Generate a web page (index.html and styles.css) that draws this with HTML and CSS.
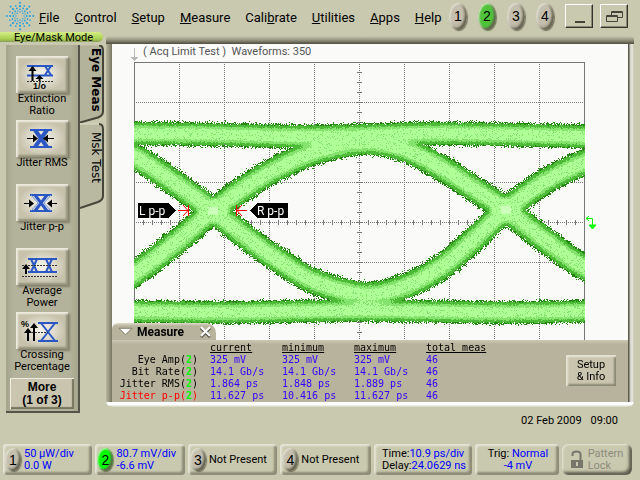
FILE: index.html
```html
<!DOCTYPE html>
<html lang="en">
<head>
<meta charset="utf-8">
<title>Eye/Mask Mode</title>
<link rel="stylesheet" href="styles.css">
</head>
<body>
<header class="menubar">
  <svg class="logo" viewBox="0 0 32 32" aria-hidden="true">
    <defs><g id="ray"><circle cx="16" cy="12" r=".7"/><circle cx="16" cy="9.300" r=".9"/><circle cx="16" cy="6.200" r="1.100"/><circle cx="16" cy="2.800" r="1"/></g>
    <g id="short"><circle cx="16" cy="10.500" r=".7"/><circle cx="16" cy="7.800" r=".9"/><circle cx="16" cy="5" r=".8"/></g></defs>
    <g fill="#269fdc">
      <use href="#ray"/><use href="#ray" transform="rotate(45 16 16)"/><use href="#ray" transform="rotate(90 16 16)"/><use href="#ray" transform="rotate(135 16 16)"/>
      <use href="#ray" transform="rotate(180 16 16)"/><use href="#ray" transform="rotate(225 16 16)"/><use href="#ray" transform="rotate(270 16 16)"/><use href="#ray" transform="rotate(315 16 16)"/>
      <use href="#short" transform="rotate(22.500 16 16)"/><use href="#short" transform="rotate(67.500 16 16)"/><use href="#short" transform="rotate(112.500 16 16)"/><use href="#short" transform="rotate(157.500 16 16)"/>
      <use href="#short" transform="rotate(202.500 16 16)"/><use href="#short" transform="rotate(247.500 16 16)"/><use href="#short" transform="rotate(292.500 16 16)"/><use href="#short" transform="rotate(337.500 16 16)"/>
    </g>
  </svg>
  <nav class="menus">
    <button><u>F</u>ile</button><button><u>C</u>ontrol</button><button><u>S</u>etup</button><button><u>M</u>easure</button><button>Cali<u>b</u>rate</button><button><u>U</u>tilities</button><button><u>A</u>pps</button><button><u>H</u>elp</button>
  </nav>
  <div class="channels">
    <button class="knob">1</button><button class="knob knob-on">2</button><button class="knob">3</button><button class="knob">4</button>
  </div>
  <div class="window-buttons">
    <button aria-label="Minimize"><svg viewBox="0 0 26 21"><path d="M9 16h10" stroke="#444438" stroke-width="2"/></svg></button>
    <button aria-label="Restore"><svg viewBox="0 0 26 21" fill="none" stroke="#444438"><path d="M10.500 10V5.500h11v6h-5M10 6.500h12"/><path d="M5.500 9.500h11v6h-11zM5 10.500h12"/></svg></button>
  </div>
</header>

<main class="workspace">
  <aside class="sidebar">
    <h1 class="mode">Eye/Mask Mode</h1>
    <div class="side-body">
      <div class="tools">
        <div class="tool"><button aria-labelledby="t1"><svg viewBox="0 0 51 36">
          <path d="M11 9h26M11 18.500h26M29 9l6 9m0-9l-6 9" stroke="#2a57c4" stroke-width="2" fill="none"/>
          <path d="M16.500 24V10M23.500 24v-4" stroke="#000" stroke-width="2"/><path d="M12.500 14l4-5 4 5zM19.500 22l4-4 4 4z"/>
          <path d="M11 24.500h27" stroke="#333" stroke-dasharray="2 1"/><text x="17" y="32">1/o</text></svg></button><span id="t1">Extinction<br>Ratio</span></div>
        <div class="tool"><button aria-labelledby="t2"><svg viewBox="0 0 51 36">
          <path d="M14 9h22M14 26h22" stroke="#2a57c4" stroke-width="2"/><path d="M19 9l12 17M31 9L19 26" stroke="#2a57c4" stroke-width="4"/>
          <path d="M11 17.500h8M38 17.500h-8" stroke="#000"/><path d="M17 13.500l5 4-5 4zM32 13.500l-5 4 5 4z"/></svg></button><span id="t2">Jitter RMS</span></div>
        <div class="tool"><button aria-labelledby="t3"><svg viewBox="0 0 51 36">
          <path d="M14 10h22M14 26h22" stroke="#2a57c4" stroke-width="2"/><path d="M19 10l12 16M31 10L19 26" stroke="#2a57c4" stroke-width="3"/><path d="M15 10l7 8-7 8M35 10l-7 8 7 8" fill="none" stroke="#6f95dd"/>
          <path d="M8 18.500h8M41 18.500h-8" stroke="#000"/><path d="M13 14.500l5 4-5 4zM36 14.500l-5 4 5 4z"/></svg></button><span id="t3">Jitter p-p</span></div>
        <div class="tool"><button aria-labelledby="t4"><svg viewBox="0 0 51 36">
          <path d="M12 10h29M12 23h29M15 10l6 13m-6 0l6-13M30 10l6 13m-6 0l6-13" stroke="#2a57c4" stroke-width="2"/>
          <path d="M6 16.500h35M6 27.500h35" stroke="#333" stroke-dasharray="2 1"/><path d="M10 25v-6" stroke="#000" stroke-width="2"/><path d="M6 20l4-5 4 5z"/></svg></button><span id="t4">Average<br>Power</span></div>
        <div class="tool"><button aria-labelledby="t5"><svg viewBox="0 0 51 36">
          <path d="M22 10h20M22 28h20M25 10l14 18M39 10L25 28" stroke="#2a57c4" stroke-width="2"/>
          <path d="M10 19.500h22" stroke="#333" stroke-dasharray="2 1"/><path d="M12 28V18M18 28V12" stroke="#000" stroke-width="2"/><path d="M8 20l4-5 4 5zM14 15l4-5 4 5z"/><text x="5" y="14">%</text></svg></button><span id="t5">Crossing<br>Percentage</span></div>
        <button class="more">More<br>(1 of 3)</button>
      </div>
      <div class="tabs">
        <button class="tab tab-on"><svg viewBox="0 0 25 78"><path d="M0 .5h19q4 0 4 5v61q0 4-5 6L0 78z" fill="#b3b29a"/><path d="M19 .5q4 0 4 5v61q0 4-5 6L0 77.500" fill="none" stroke="#45453a" stroke-width="2"/></svg><span>Eye Meas</span></button>
        <button class="tab"><svg viewBox="0 0 25 86"><path d="M0 1h19q4 0 4 5v67q0 4-5 6L0 85z" fill="#b9b8a0"/><path d="M0 1h19" stroke="#dcdcc8"/><path d="M19 1q4 0 4 5v67q0 4-5 6L0 85" fill="none" stroke="#45453a" stroke-width="2"/></svg><span>Msk Test</span></button>
      </div>
    </div>
  </aside>

  <section class="display">
    <div class="screen">
      <div class="plot">
        <svg class="grid" viewBox="112 44 516 296" shape-rendering="crispEdges">
          <g id="graticule" stroke="#77777a"></g>
          <path d="M134.500 340V62.500h450V340" fill="none" stroke="#77777a"/>
          <path d="M134.500 48v11" stroke="#b8b8b8"/><path d="M131 57h7l-3.500 4z" fill="#b8b8b8"/>
          <text class="status" x="143" y="55">( Acq Limit Test )&nbsp; Waveforms: 350</text>
        </svg>
        <canvas id="eye" width="516" height="296"></canvas>
        <svg class="marks" viewBox="112 44 516 296">
          <path d="M137.500 202.500h31l8 8-8 8h-31z" stroke="#fff"/><path d="M288.500 202.500h-31l-8 8 8 8h31z" stroke="#fff"/>
          <text class="flag" x="139" y="215">L p-p</text><text class="flag" x="257" y="215">R p-p</text>
          <path d="M178 210.500h10M188.500 205v11M183 205l5 5.500-5 5.500M247 210.500h-10M236.500 205v11M242 205l-5 5.500 5 5.500" fill="none" stroke="#f00" stroke-width="1"/>
          <path d="M586 218.500h6.500V227M589 216l-3 2.500 3 2.500" fill="none" stroke="#0e0"/><path d="M589 225h7l-3.500 4z" fill="#0f0" stroke="#0f0"/>
        </svg>
      </div>
      <section class="measure">
        <div class="measure-tab">
          <button aria-label="Collapse"><svg viewBox="0 0 16 12"><path d="M1 2h14L8 9z" fill="#fff" stroke="#77745f"/></svg></button>
          <h2>Measure</h2>
          <button class="close" aria-label="Close"><svg viewBox="0 0 13 13"><path d="M2 3l9 9m0-9l-9 9" stroke="#555548" stroke-width="3"/><path d="M2 2l9 9m0-9l-9 9" stroke="#fff" stroke-width="2"/></svg></button>
        </div>
        <div class="measure-body">
          <table>
            <thead><tr><td></td><th>current</th><th>minimum</th><th>maximum</th><th>total meas</th></tr></thead>
            <tbody>
              <tr><th>Eye Amp(<b>2</b>)</th><td>325 mV</td><td>325 mV</td><td>325 mV</td><td>46</td></tr>
              <tr><th>Bit Rate(<b>2</b>)</th><td>14.1 Gb/s</td><td>14.1 Gb/s</td><td>14.1 Gb/s</td><td>46</td></tr>
              <tr><th>Jitter RMS(<b>2</b>)</th><td>1.864 ps</td><td>1.848 ps</td><td>1.889 ps</td><td>46</td></tr>
              <tr class="selected"><th>Jitter p-p(<b>2</b>)</th><td>11.627 ps</td><td>10.416 ps</td><td>11.627 ps</td><td>46</td></tr>
            </tbody>
          </table>
          <button class="setup">Setup<br>&amp; Info</button>
        </div>
      </section>
    </div>
    <p class="clock"><span>02 Feb 2009</span><span>09:00</span></p>
  </section>
</main>

<footer class="statusbar">
  <button class="cell"><span class="knob">1</span><span class="value">50 µW/div<br>0.0 W</span></button>
  <button class="cell"><span class="knob knob-live">2</span><span class="value">80.7 mV/div<br>-6.6 mV</span></button>
  <button class="cell"><span class="knob">3</span><span>Not Present</span></button>
  <button class="cell"><span class="knob">4</span><span>Not Present</span></button>
  <button class="cell cell-time"><span>Time:<i>10.9 ps/div</i><br>Delay:<i>24.0629 ns</i></span></button>
  <button class="cell cell-trig"><span>Trig: <i>Normal</i><br><i>-4 mV</i></span></button>
  <button class="cell cell-lock" disabled><svg viewBox="0 0 14 20"><path d="M2.500 6V4q0-2.500 4-2.500T10.500 4v6" fill="none" stroke="#77766a" stroke-width="2"/><path d="M1 10h12v8H1z" fill="#77766a"/><path d="M7 12v4" stroke="#cbcab0" stroke-width="2"/></svg><span>Pattern<br>Lock</span></button>
</footer>
<script src="eye.js"></script>
</body>
</html>
```
FILE: styles.css
```css
:root {
  --bg: #c9c9af;
  --panel: #b3b29a;
  --face: #c9c5ae;
  --ui: Roboto, "Liberation Sans", sans-serif;
}
* { box-sizing: border-box; }
body {
  margin: 0;
  min-height: 100vh;
  display: flex;
  flex-direction: column;
  background: var(--bg);
  color: #000;
  font: 11px/12px var(--ui);
}
button {
  margin: 0;
  padding: 0;
  border: 0;
  background: none;
  color: inherit;
  font: inherit;
}
svg { display: block; }
i { font-style: normal; color: #00f; }

.menubar {
  height: 32px;
  padding: 0 12px 0 4px;
  display: flex;
  align-items: center;
}
.logo {
  flex: none;
  width: 32px;
  height: 32px;
}
.menus {
  display: flex;
  gap: 15px;
  margin-left: 3px;
  font-size: 13px;
  line-height: 20px;
  padding-top: 4px;
}
.channels {
  display: flex;
  gap: 11px;
  margin-left: auto;
}
.knob {
  flex: none;
  width: 18px;
  height: 27px;
  display: grid;
  place-items: center;
  border-radius: 50%;
  background: radial-gradient(ellipse at 35% 40%, #c4bfad 40%, #aaa592 75%);
  box-shadow: inset 1px 1px 2px #e6e4d6, inset -2px -2px 2px #64624f, 1px 1px 1px #77755f;
  font: 14px/16px "Liberation Sans", sans-serif;
}
.knob-on { background: #50c33a; }
.knob-live { background: #0f0; }
.window-buttons {
  display: flex;
  gap: 7px;
  margin-left: 11px;
}
.window-buttons button {
  width: 28px;
  height: 24px;
  border: 1px solid;
  border-color: #fff #33332a #33332a #fff;
  box-shadow: inset -1px -1px #8a8975;
}

.workspace {
  display: grid;
  grid-template-columns: 106px 1fr;
}
.mode {
  margin: 0 3px 3px 0;
  height: 10px;
  padding-left: 14px;
  border-radius: 0 6px 6px 0;
  background: linear-gradient(#d4ee86, #a8cf50 70%, #8a9c58);
  font: 11px/11px var(--ui);
}
.side-body {
  display: flex;
  padding-left: 6px;
}
.tools {
  width: 74px;
  padding: 11px 4px 2px 4px;
  background: linear-gradient(90deg, #a5a48d, var(--panel) 8px, var(--panel) 64px, #a5a48d);
  border-right: 2px solid #55544a;
  border-bottom: 2px solid #55544a;
}
.tool {
  height: 64px;
  display: flex;
  flex-direction: column;
  align-items: center;
  text-align: center;
}
.tool button {
  width: 52px;
  height: 37px;
  background: radial-gradient(ellipse at 50% 50%, #f2f0e6 10%, #c6c2ac 65%);
  box-shadow: inset 2px 2px 2px #eeecdf, inset -2px -2px 2px #96937c, 2px 2px 2px #83816c;
}
.tool svg { width: 51px; height: 36px; }
.tool text { font: bold 9px "Liberation Sans", sans-serif; }
.tool span { white-space: nowrap; }
.more {
  width: 100%;
  height: 31px;
  margin-top: 2px;
  background: var(--face);
  box-shadow: inset 1px 1px #eeecdf, inset -2px -2px 1px #77755f;
  font: bold 12px/13px "Liberation Sans", sans-serif;
  white-space: nowrap;
}
.tabs { width: 25px; }
.tab { display: grid; }
.tab svg, .tab span { grid-area: 1 / 1; }
.tab svg { width: 25px; }
.tab span {
  writing-mode: vertical-rl;
  padding: 9px 0;
  font: 12px/18px "DejaVu Sans", sans-serif;
  text-align: left;
}
.tab-on span {
  padding: 3px 0;
  font-weight: bold;
}

.display { padding: 4px 6px 0 0; }
.screen {
  display: flow-root;
  padding: 8px 6px 0 6px;
  border-radius: 4px 4px 6px 6px;
  overflow: hidden;
  background: linear-gradient(90deg, #b9b8a0, #77755f 6px, #5d5b4b calc(100% - 6px), #5d5b4b calc(100% - 5px), #c9c9c4 calc(100% - 4px), #e9e8df calc(100% - 2px), #c9c9af);
  position: relative;
}
.screen::before {
  content: "";
  position: absolute;
  inset: 0 0 auto 0;
  height: 8px;
  background: linear-gradient(#c9c9af, #96957f 50%, #4d4b3c);
}
.screen::after {
  content: "";
  display: block;
  height: 5px;
  margin: 0 -6px;
  background: linear-gradient(#fff, #fff 50%, #d2d2ba);
}
.plot {
  display: grid;
  background: #fafaf8;
}
.plot > * {
  grid-area: 1 / 1;
  width: 100%;
  height: auto;
}
.plot canvas { display: block; }
.status { font: 11px var(--ui); fill: #555; }
.flag { font: 12px var(--ui); fill: #fff; }

.measure {
  position: relative;
  margin-top: -17px;
}
.measure-tab {
  width: 104px;
  height: 17px;
  padding: 0 4px 0 6px;
  display: flex;
  align-items: center;
  border-radius: 6px 10px 0 0;
  background: linear-gradient(#dddbc9, #b8b39c 3px);
}
.measure-tab svg { width: 15px; height: 12px; }
.measure-tab .close { margin-left: auto; }
.measure-tab .close svg { width: 13px; height: 13px; }
.measure h2 {
  margin: 0 0 0 4px;
  font: bold 12px/14px var(--ui);
}
.measure-body {
  height: 62px;
  padding: 2px 12px 0 2px;
  display: flex;
  justify-content: space-between;
  background: linear-gradient(#cbc9b5, #b8b39c 4px);
}
table {
  border-spacing: 0;
  height: 60px;
  font: 10px/12px "DejaVu Sans Mono", monospace;
}
th, td {
  padding: 0;
  width: 72px;
  height: 12px;
  text-align: left;
  font-weight: normal;
  white-space: nowrap;
}
tr > :first-child {
  width: 96px;
  padding-right: 12px;
  text-align: right;
}
thead th { text-decoration: underline; }
tbody td { color: #30f; }
tbody b { color: #0f0; }
.selected th { color: #f00; }
.setup {
  width: 50px;
  height: 31px;
  margin-top: 13px;
  background: var(--face);
  box-shadow: inset 2px 2px 2px #e6e4d6, inset -2px -2px 2px #8a8872;
}

.clock {
  margin: 8px 16px 0 0;
  display: flex;
  justify-content: flex-end;
  gap: 9px;
}

.statusbar {
  margin-top: auto;
  padding: 0 8px 5px 3px;
  display: grid;
  grid-template-columns: 89fr 89fr 89fr 90fr 98fr 83fr 70fr;
  gap: 3px;
}
.cell {
  height: 31px;
  padding-left: 2px;
  display: flex;
  align-items: center;
  gap: 3px;
  border-radius: 3px;
  background: var(--bg);
  box-shadow: inset 2px 2px 2px #e6e4d6, inset -3px -3px 2px #8f8d78;
  text-align: left;
  white-space: nowrap;
}
.cell .knob {
  width: 16px;
  height: 23px;
}
.value { color: #00f; }
.cell-time, .cell-trig { justify-content: center; }
.cell-trig { text-align: center; }
.cell-lock {
  padding-left: 8px;
  gap: 4px;
  border-radius: 6px;
  color: #8d8c7c;
  box-shadow: inset 1px 1px 2px #e6e4d6, inset -3px -3px 3px #5d5b4b;
}
.cell-lock svg { width: 14px; height: 20px; }
```
FILE: eye.js
```js
// Graticule: 10 columns of 45 units, rows of 40 units, fine ticks on both axes.
const lines = [];
for (let i = 1; i < 10; i++) lines.push(`<path d="M${134.5 + i * 45} 64V340" stroke-dasharray="1 1"/>`);
for (let y = 102.5; y < 340; y += 40) lines.push(`<path d="M136 ${y}H584" stroke-dasharray="1 1"/>`);
for (let x = 143.5; x < 584; x += 9) lines.push(`<path d="M${x} 220v5"/>`);
for (let y = 72.5; y < 340; y += 10) lines.push(`<path d="M357 ${y}h5"/>`);
document.getElementById('graticule').innerHTML = lines.join('');

// Each trace: centre line points and half thickness.
const traces = [
  { h: 12, p: [[60, 133], [134, 133], [212, 134], [300, 136], [359, 135], [430, 133], [500, 134], [584, 136], [650, 137]] },
  { h: 11.5, p: [[60, 311], [134, 311], [212, 312], [290, 311], [359, 310], [430, 311], [505, 312], [584, 311], [650, 311]] },
  { h: 13, p: [[80, 305], [134, 273], [175, 242], [212, 211], [245, 187], [277, 168], [314, 152], [363, 142], [404, 149], [440, 167], [470, 186], [505, 209], [545, 240], [584, 267], [650, 300]] },
  { h: 13, p: [[80, 130], [134, 156], [175, 183], [212, 210], [245, 236], [277, 259], [314, 281], [365, 294], [404, 286], [440, 267], [470, 242], [505, 210], [545, 181], [584, 162], [650, 140]] }
];
function centre(p, x) {
  let i = 1;
  while (i < p.length - 3 && x > p[i + 1][0]) i++;
  const a = p[i - 1], b = p[i], c = p[i + 1], d = p[i + 2] || c;
  const w = c[0] - b[0], t = (x - b[0]) / w;
  const m = w * (c[1] - a[1]) / (c[0] - a[0]), n = w * (d[1] - b[1]) / (d[0] - b[0]);
  return (2 * t ** 3 - 3 * t * t + 1) * b[1] + (t ** 3 - 2 * t * t + t) * m + (3 * t * t - 2 * t ** 3) * c[1] + (t ** 3 - t * t) * n;
}
let seed = 7;
function random() {
  seed = (seed * 1664525 + 1013904223) % 4294967296;
  return seed / 4294967296;
}
const ctx = document.getElementById('eye').getContext('2d');
const palette = ['#23860f', '#4dbb38', '#84e36c', '#aeff96', '#ccffba'];
for (let x = 134; x < 585; x++) {
  const cols = traces.map(t => {
    const c = centre(t.p, x), s = centre(t.p, x + 1) - c;
    return { c, h: t.h * Math.sqrt(1 + s * s) };
  });
  for (let y = 110; y < 335; y++) {
    let best = -9, sum = 0;
    for (const k of cols) {
      const u = 1 - Math.abs(y - k.c) / k.h;
      best = Math.max(best, u);
      if (u > 0) sum += u;
    }
    const edge = best + (random() + random() - 1) * 0.2;
    if (edge < 0) continue;
    const v = Math.max(best, sum * 0.85) + (random() - 0.5) * 0.14;
    let level = v < 0.1 ? 0 : v < 0.34 ? 1 : v < 0.55 ? 2 : v < 1.3 ? 3 : 4;
    if (level === 3 && random() < 0.12) level = 2;
    ctx.fillStyle = palette[level];
    ctx.fillRect(x - 112, y - 44, 1, 1);
  }
}
```
